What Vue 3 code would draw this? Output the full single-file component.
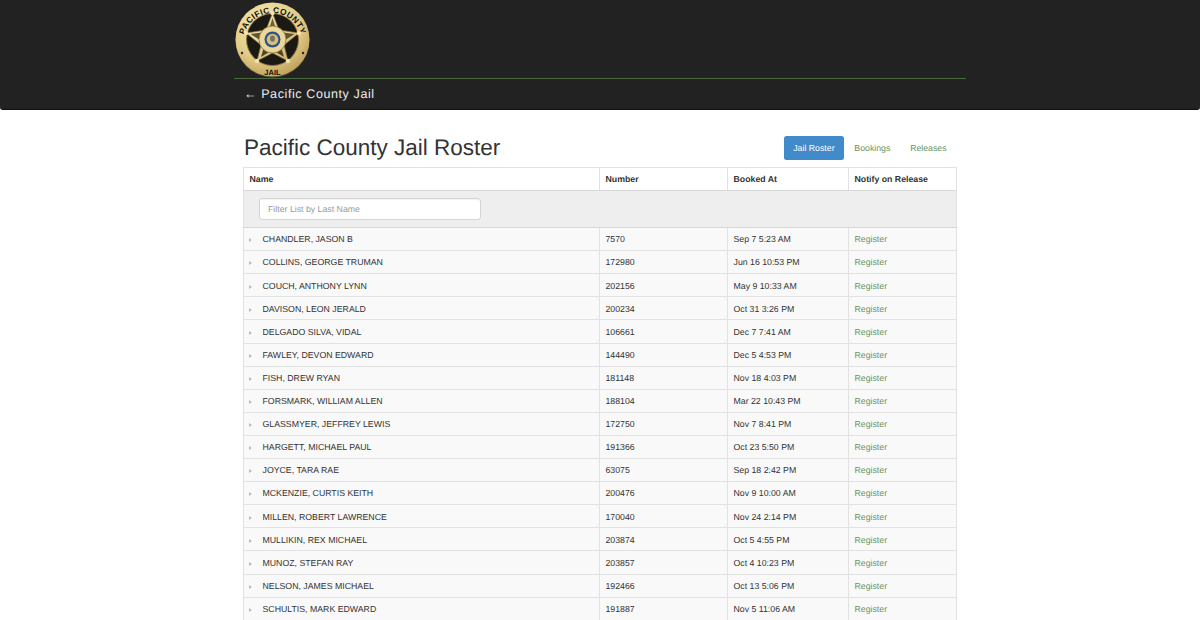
<template>
  <div class="page">
    <header class="navbar">
      <div class="nav-inner">
        <div class="logo-row">
          <svg class="logo" viewBox="0 0 76 78" width="76" height="78">
            <defs>
              <radialGradient id="goldRing" cx="40%" cy="30%" r="80%">
                <stop offset="0" stop-color="#f8ecb8" />
                <stop offset="0.6" stop-color="#e2ca86" />
                <stop offset="1" stop-color="#b29550" />
              </radialGradient>
              <linearGradient id="goldStar" x1="0" y1="0" x2="1" y2="1">
                <stop offset="0" stop-color="#fbf0c0" />
                <stop offset="1" stop-color="#cfb26a" />
              </linearGradient>
              <path id="arcTop" d="M 8.5 41 A 29 29 0 0 1 66.5 41" />
            </defs>
            <circle cx="37.5" cy="39.5" r="37" fill="#4a4636" />
            <circle cx="37.5" cy="38.5" r="37" fill="url(#goldRing)" />
            <circle cx="37.5" cy="38.5" r="26" fill="#1a1914" stroke="#8d7440" stroke-width="1" />
            <text class="badge-top" font-size="8.4" letter-spacing="0.4" fill="#14110a">
              <textPath href="#arcTop" startOffset="50%" text-anchor="middle">PACIFIC COUNTY</textPath>
            </text>
            <text class="badge-bottom" x="37.5" y="74" text-anchor="middle" font-size="7.5" fill="#14110a">JAIL</text>
            <polygon
              points="37.5,12 44,29 64,32 49,44 53,60 37.5,52 22,60 26,44 11,32 31,29"
              fill="url(#goldStar)"
              stroke="#8a7038"
              stroke-width="0.7"
            />
            <polygon points="15.5,33 31,31 28.5,41.5" fill="#5f5432" />
            <polygon points="59.5,33 44,31 46.5,41.5" fill="#5f5432" />
            <polygon points="26,56 29.5,44 36,50" fill="#4f4629" />
            <polygon points="49,56 45.5,44 39,50" fill="#4f4629" />
            <polygon points="37.5,17 34,28 41,28" fill="#6b5f38" />
            <circle cx="11" cy="32" r="2.2" fill="#f3e3a8" />
            <circle cx="64" cy="32" r="2.2" fill="#f3e3a8" />
            <circle cx="37.5" cy="12" r="2.2" fill="#f3e3a8" />
            <circle cx="22" cy="60" r="2.2" fill="#f3e3a8" />
            <circle cx="53" cy="60" r="2.2" fill="#f3e3a8" />
            <circle cx="37.5" cy="38.5" r="13.5" fill="#ead79a" stroke="#8a7038" stroke-width="0.8" />
            <circle cx="37.5" cy="38.5" r="8" fill="#2c5486" />
            <circle cx="37.5" cy="38.5" r="5.8" fill="#d4be84" />
            <ellipse cx="37.5" cy="37.6" rx="2.4" ry="3.2" fill="#7a7256" />
            <circle cx="7" cy="52" r="1.2" fill="#2b2615" />
            <circle cx="68" cy="52" r="1.2" fill="#2b2615" />
          </svg>
        </div>
        <div class="back-row">← Pacific County Jail</div>
      </div>
    </header>

    <main class="content">
      <div class="title-row">
        <h1>Pacific County Jail Roster</h1>
        <ul class="pills">
          <li v-for="tab in tabs" :key="tab" :class="{ active: tab === activeTab }">{{ tab }}</li>
        </ul>
      </div>

      <table class="roster">
        <colgroup>
          <col class="col-name" />
          <col class="col-number" />
          <col class="col-booked" />
          <col class="col-notify" />
        </colgroup>
        <thead>
          <tr>
            <th>Name</th>
            <th>Number</th>
            <th>Booked At</th>
            <th>Notify on Release</th>
          </tr>
        </thead>
        <tbody>
          <tr class="filter-row">
            <td colspan="4">
              <input v-model="filter" type="text" placeholder="Filter List by Last Name" />
            </td>
          </tr>
          <tr v-for="row in filtered" :key="row.number" class="person">
            <td>
              <span class="caret"></span>
              <span class="name">{{ row.name }}</span>
            </td>
            <td>{{ row.number }}</td>
            <td>{{ row.booked }}</td>
            <td class="link">Register</td>
          </tr>
        </tbody>
      </table>
    </main>
  </div>
</template>

<script setup>
import { computed, ref } from 'vue'

const tabs = ['Jail Roster', 'Bookings', 'Releases']
const activeTab = ref('Jail Roster')
const filter = ref('')

const rows = [
  { name: 'CHANDLER, JASON B', number: '7570', booked: 'Sep 7 5:23 AM' },
  { name: 'COLLINS, GEORGE TRUMAN', number: '172980', booked: 'Jun 16 10:53 PM' },
  { name: 'COUCH, ANTHONY LYNN', number: '202156', booked: 'May 9 10:33 AM' },
  { name: 'DAVISON, LEON JERALD', number: '200234', booked: 'Oct 31 3:26 PM' },
  { name: 'DELGADO SILVA, VIDAL', number: '106661', booked: 'Dec 7 7:41 AM' },
  { name: 'FAWLEY, DEVON EDWARD', number: '144490', booked: 'Dec 5 4:53 PM' },
  { name: 'FISH, DREW RYAN', number: '181148', booked: 'Nov 18 4:03 PM' },
  { name: 'FORSMARK, WILLIAM ALLEN', number: '188104', booked: 'Mar 22 10:43 PM' },
  { name: 'GLASSMYER, JEFFREY LEWIS', number: '172750', booked: 'Nov 7 8:41 PM' },
  { name: 'HARGETT, MICHAEL PAUL', number: '191366', booked: 'Oct 23 5:50 PM' },
  { name: 'JOYCE, TARA RAE', number: '63075', booked: 'Sep 18 2:42 PM' },
  { name: 'MCKENZIE, CURTIS KEITH', number: '200476', booked: 'Nov 9 10:00 AM' },
  { name: 'MILLEN, ROBERT LAWRENCE', number: '170040', booked: 'Nov 24 2:14 PM' },
  { name: 'MULLIKIN, REX MICHAEL', number: '203874', booked: 'Oct 5 4:55 PM' },
  { name: 'MUNOZ, STEFAN RAY', number: '203857', booked: 'Oct 4 10:23 PM' },
  { name: 'NELSON, JAMES MICHAEL', number: '192466', booked: 'Oct 13 5:06 PM' },
  { name: 'SCHULTIS, MARK EDWARD', number: '191887', booked: 'Nov 5 11:06 AM' }
]

const filtered = computed(() =>
  rows.filter((r) => r.name.toLowerCase().startsWith(filter.value.toLowerCase()))
)
</script>

<style>
html,
body {
  margin: 0;
  background: #fff;
  overflow: hidden;
}
</style>

<style scoped>
.page {
  font-family: "Liberation Sans", Arial, sans-serif;
  font-size: 8.75px;
  line-height: 12.5px;
  color: #333;
  text-rendering: geometricPrecision;
}

.navbar {
  height: 110px;
  box-sizing: border-box;
  background: #222;
  border-bottom: 1px solid #111;
  border-radius: 0 0 3px 3px;
}

.nav-inner {
  width: 732px;
  margin: 0 auto;
}

.logo-row {
  height: 79px;
  box-sizing: border-box;
  padding-top: 1px;
  padding-left: 1px;
  border-bottom: 1px solid #49683f;
}

.logo {
  display: block;
}

.back-row {
  padding: 7px 10px;
  font-size: 12.5px;
  line-height: 16px;
  letter-spacing: 0.6px;
  color: #eee;
}

.badge-top,
.badge-bottom {
  font-family: "Liberation Sans", Arial, sans-serif;
  font-weight: 700;
}

.content {
  width: 713px;
  margin-left: calc(50% - 357px);
}

.title-row {
  display: flex;
  justify-content: space-between;
  align-items: center;
  box-sizing: border-box;
  height: 57px;
  padding: 25px 0 6px 1px;
}

h1 {
  margin: 0;
  font-size: 22.5px;
  font-weight: 400;
  line-height: 26px;
  color: #333;
}

.pills {
  display: flex;
  gap: 1px;
  margin: 0;
  padding: 0;
  list-style: none;
}

.pills li {
  padding: 6px 9.4px;
  line-height: 12.5px;
  border-radius: 2.5px;
  color: #6a9460;
}

.pills li.active {
  background: #428bca;
  color: #fff;
}

.roster {
  width: 713px;
  table-layout: fixed;
  border-collapse: collapse;
  border: 1px solid #e2e2e2;
}

.col-name { width: 356px; }
.col-number { width: 128px; }
.col-booked { width: 121px; }
.col-notify { width: 108px; }

th,
td {
  padding: 4.8px 5px 4.8px 5.5px;
  border: 1px solid #e2e2e2;
  text-align: left;
}

th {
  border-bottom: 1px solid #d6d6d6;
  font-weight: 700;
}

.person td {
  padding-top: 5.3px;
  padding-bottom: 4.3px;
  background: #f9f9f9;
}

.filter-row td {
  padding: 7px 15px;
  background: #eee;
  border-bottom-color: #d6d6d6;
}

input {
  display: block;
  width: 222px;
  height: 22px;
  box-sizing: border-box;
  padding: 0 8px;
  font-family: inherit;
  font-size: 8.75px;
  color: #555;
  background: #fff;
  border: 1px solid #d4d4d4;
  border-radius: 3px;
  box-shadow: inset 0 1px 1px rgba(0, 0, 0, 0.05);
  outline: none;
  text-rendering: geometricPrecision;
}

input::placeholder {
  color: #999;
}

.caret {
  display: inline-block;
  width: 0;
  height: 0;
  margin-left: -1px;
  margin-right: 11px;
  border-left: 3px solid #bbb;
  border-top: 2.5px solid transparent;
  border-bottom: 2.5px solid transparent;
}

.link {
  color: #6a9460;
}
</style>
